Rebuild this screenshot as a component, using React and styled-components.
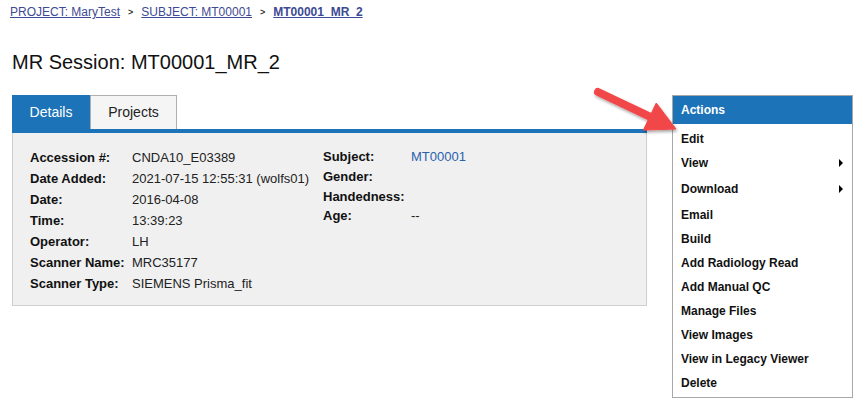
import React from "react";
import styled, { createGlobalStyle } from "styled-components";

const Global = createGlobalStyle`
  html, body { margin: 0; padding: 0; background: #fff; }
  body { font-family: "Liberation Sans", Arial, sans-serif; color: #000; }
`;

const Page = styled.div`
  position: relative;
  width: 862px;
  height: 415px;
  padding: 5px 0 0 10px;
  box-sizing: border-box;
`;

const Crumbs = styled.div`
  display: flex;
  align-items: center;
  gap: 8px;
  font-size: 12px;
  line-height: 14px;
`;

const Crumb = styled.a`
  color: #3d4a94;
  text-decoration: underline;
  font-weight: ${(p) => (p.$current ? "bold" : "normal")};
`;

const Sep = styled.span`
  font-size: 9px;
  color: #333;
  font-weight: bold;
`;

const Title = styled.h1`
  margin: 0;
  padding: 32px 0 0 2px;
  font-size: 20px;
  line-height: 23px;
  font-weight: normal;
  color: #111;
`;

const Row = styled.div`
  display: flex;
  align-items: flex-start;
  margin: 21px 0 0 2px;
  gap: 25px;
`;

const Main = styled.div`
  width: 635px;
`;

const Tabs = styled.div`
  display: flex;
  height: 34px;
  border-bottom: 4px solid #1c73b8;
`;

const Tab = styled.div`
  box-sizing: border-box;
  width: ${(p) => p.$w}px;
  display: flex;
  align-items: center;
  justify-content: center;
  font-size: 14px;
  background: ${(p) => (p.$active ? "#1c73b8" : "#f5f5f5")};
  color: ${(p) => (p.$active ? "#fff" : "#222")};
  border: ${(p) => (p.$active ? "none" : "1px solid #b0b0b0")};
  border-bottom: none;
  padding-bottom: 1px;
`;

const Panel = styled.div`
  box-sizing: border-box;
  height: 173px;
  background: #f0f0f0;
  border: 1px solid #cfcfcf;
  border-top: none;
  padding: 14px 0 0 17px;
  display: flex;
`;

const Fields = styled.div`
  display: grid;
  grid-template-columns: ${(p) => p.$label}px auto;
  grid-auto-rows: ${(p) => p.$row}px;
  align-items: center;
  width: ${(p) => p.$w}px;
  font-size: 13px;
`;

const Label = styled.div`
  font-weight: bold;
  color: #111;
`;

const Value = styled.div`
  color: #222;
  white-space: nowrap;
`;

const ValueLink = styled.a`
  color: #2a62ad;
  text-decoration: none;
`;

const Menu = styled.div`
  box-sizing: border-box;
  width: 181px;
  height: 303px;
  border: 1px solid #a8a8a8;
  background: #fff;
`;

const MenuHead = styled.div`
  height: 28px;
  background: #1c73b8;
  color: #fff;
  font-weight: bold;
  font-size: 12px;
  display: flex;
  align-items: center;
  padding-left: 8px;
`;

const MenuList = styled.div`
  padding-top: 3px;
  display: flex;
  flex-direction: column;
`;

const Item = styled.div`
  height: ${(p) => p.$h}px;
  display: flex;
  align-items: center;
  justify-content: space-between;
  padding: 0 9px 0 8px;
  font-size: 12px;
  font-weight: bold;
  color: #111;
`;

const Caret = styled.span`
  width: 0;
  height: 0;
  border-top: 4px solid transparent;
  border-bottom: 4px solid transparent;
  border-left: 4px solid #000;
`;

const ArrowSvg = styled.svg`
  position: absolute;
  left: 0;
  top: 0;
  pointer-events: none;
`;

const left = [
  ["Accession #:", "CNDA10_E03389"],
  ["Date Added:", "2021-07-15 12:55:31 (wolfs01)"],
  ["Date:", "2016-04-08"],
  ["Time:", "13:39:23"],
  ["Operator:", "LH"],
  ["Scanner Name:", "MRC35177"],
  ["Scanner Type:", "SIEMENS Prisma_fit"],
];

const items = [
  ["Edit", 23],
  ["View", 26, true],
  ["Download", 26, true],
  ["Email", 25],
  ["Build", 24],
  ["Add Radiology Read", 24],
  ["Add Manual QC", 24],
  ["Manage Files", 24],
  ["View Images", 24],
  ["View in Legacy Viewer", 24],
  ["Delete", 24],
];

function RedArrow() {
  const tip = [676, 129];
  const tail = [598, 92];
  const dx = tip[0] - tail[0];
  const dy = tip[1] - tail[1];
  const len = Math.hypot(dx, dy);
  const u = [dx / len, dy / len];
  const n = [-u[1], u[0]];
  const hl = 29;
  const hw = 15;
  const base = [tip[0] - hl * u[0], tip[1] - hl * u[1]];
  const p1 = [base[0] + hw * n[0], base[1] + hw * n[1]];
  const p2 = [base[0] - hw * n[0], base[1] - hw * n[1]];
  const shaftEnd = [base[0] + 3 * u[0], base[1] + 3 * u[1]];
  return (
    <ArrowSvg width="862" height="415" viewBox="0 0 862 415">
      <defs>
        <filter id="sh" x="-20%" y="-20%" width="140%" height="160%">
          <feDropShadow dx="1" dy="2" stdDeviation="1.5" floodColor="#000" floodOpacity="0.35" />
        </filter>
      </defs>
      <g filter="url(#sh)" fill="#f2474a" stroke="#f2474a">
        <line
          x1={tail[0]}
          y1={tail[1]}
          x2={shaftEnd[0]}
          y2={shaftEnd[1]}
          strokeWidth="8"
          strokeLinecap="round"
        />
        <polygon
          points={`${tip[0]},${tip[1]} ${p1[0]},${p1[1]} ${p2[0]},${p2[1]}`}
          strokeWidth="1"
          strokeLinejoin="round"
        />
      </g>
    </ArrowSvg>
  );
}

export default function App() {
  return (
    <>
      <Global />
      <Page>
        <Crumbs>
          <Crumb href="#">PROJECT: MaryTest</Crumb>
          <Sep>&gt;</Sep>
          <Crumb href="#">SUBJECT: MT00001</Crumb>
          <Sep>&gt;</Sep>
          <Crumb href="#" $current>
            MT00001_MR_2
          </Crumb>
        </Crumbs>
        <Title>MR Session: MT00001_MR_2</Title>
        <Row>
          <Main>
            <Tabs>
              <Tab $active $w={78}>Details</Tab>
              <Tab $w={87}>Projects</Tab>
            </Tabs>
            <Panel>
              <Fields $label={102} $w={293} $row={21}>
                {left.map(([l, v]) => (
                  <React.Fragment key={l}>
                    <Label>{l}</Label>
                    <Value>{v}</Value>
                  </React.Fragment>
                ))}
              </Fields>
              <Fields $label={88} $w={200} $row={19.7}>
                <Label>Subject:</Label>
                <Value>
                  <ValueLink href="#">MT00001</ValueLink>
                </Value>
                <Label>Gender:</Label>
                <Value></Value>
                <Label>Handedness:</Label>
                <Value></Value>
                <Label>Age:</Label>
                <Value>--</Value>
              </Fields>
            </Panel>
          </Main>
          <Menu>
            <MenuHead>Actions</MenuHead>
            <MenuList>
              {items.map(([t, h, sub]) => (
                <Item key={t} $h={h}>
                  <span>{t}</span>
                  {sub && <Caret />}
                </Item>
              ))}
            </MenuList>
          </Menu>
        </Row>
        <RedArrow />
      </Page>
    </>
  );
}
